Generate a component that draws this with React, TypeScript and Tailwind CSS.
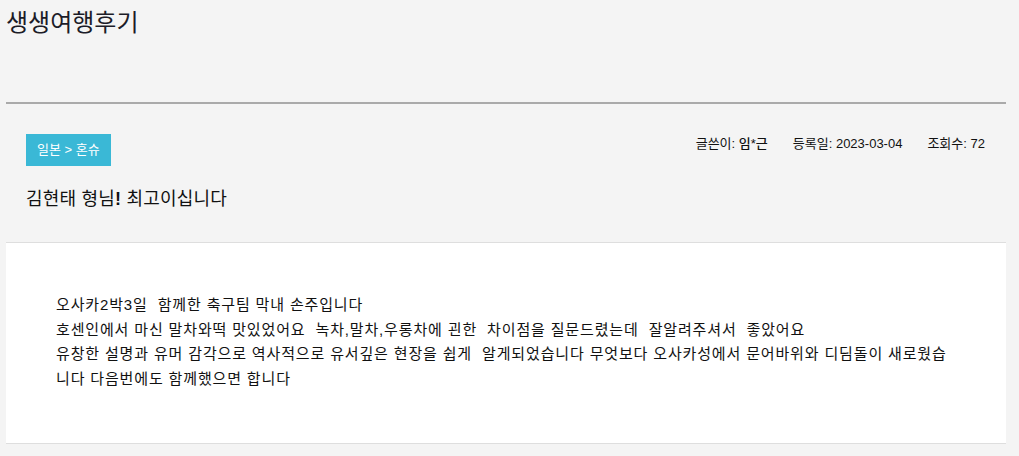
import React from 'react';

const FONT = '"Liberation Sans", "Noto Sans CJK KR", sans-serif';

const meta = [
	{ label: '글쓴이', value: '임*근' },
	{ label: '등록일', value: '2023-03-04' },
	{ label: '조회수', value: '72' },
];

const body = [
	'오사카2박3일  함께한 축구팀 막내 손주입니다',
	'호센인에서 마신 말차와떡 맛있었어요  녹차,말차,우롱차에 괸한  차이점을 질문드렸는데  잘알려주셔서  좋았어요',
	'유창한 설명과 유머 감각으로 역사적으로 유서깊은 현장을 쉽게  알게되었습니다 무엇보다 오사카성에서 문어바위와 디딤돌이 새로웠습니다 다음번에도 함께했으면 합니다',
];

export default function App() {
	return (
		<div className="min-h-screen bg-[#f4f4f4] pl-[6px] pr-[13px] text-[#111]" style={{ fontFamily: FONT }}>
			<div className="h-[104px] border-b-2 border-[#aaa]">
				<h1 className="pt-[7px] text-[24px] leading-[32px] text-[#1c1c28]">생생여행후기</h1>
			</div>

			<div className="px-[20px]">
				<div className="flex items-start justify-between pt-[30px]">
					<span className="flex h-[32px] items-center bg-[#3ab8d6] px-[11px] text-[13px] text-white">
						일본 &gt; 혼슈
					</span>
					<div className="flex gap-[25px] pt-[2px] pr-[1px] text-[13px] leading-[16px]">
						{meta.map((m) => (
							<span key={m.label}>
								{m.label}: <span className="font-medium">{m.value}</span>
							</span>
						))}
					</div>
				</div>
				<h2 className="mt-[21px] text-[18px] leading-[24px] tracking-[0.2px]">
					김현태 형님<b>!</b> 최고이십니다
				</h2>
			</div>

			<div className="mt-[31px] border-y border-[#dedede] bg-white px-[50px] pt-[50px] pb-[52px]">
				<div className="text-[15px] leading-[24.5px] tracking-[0.85px] whitespace-pre-wrap">
					{body.map((line, i) => (
						<p key={i}>{line}</p>
					))}
				</div>
			</div>
		</div>
	);
}
